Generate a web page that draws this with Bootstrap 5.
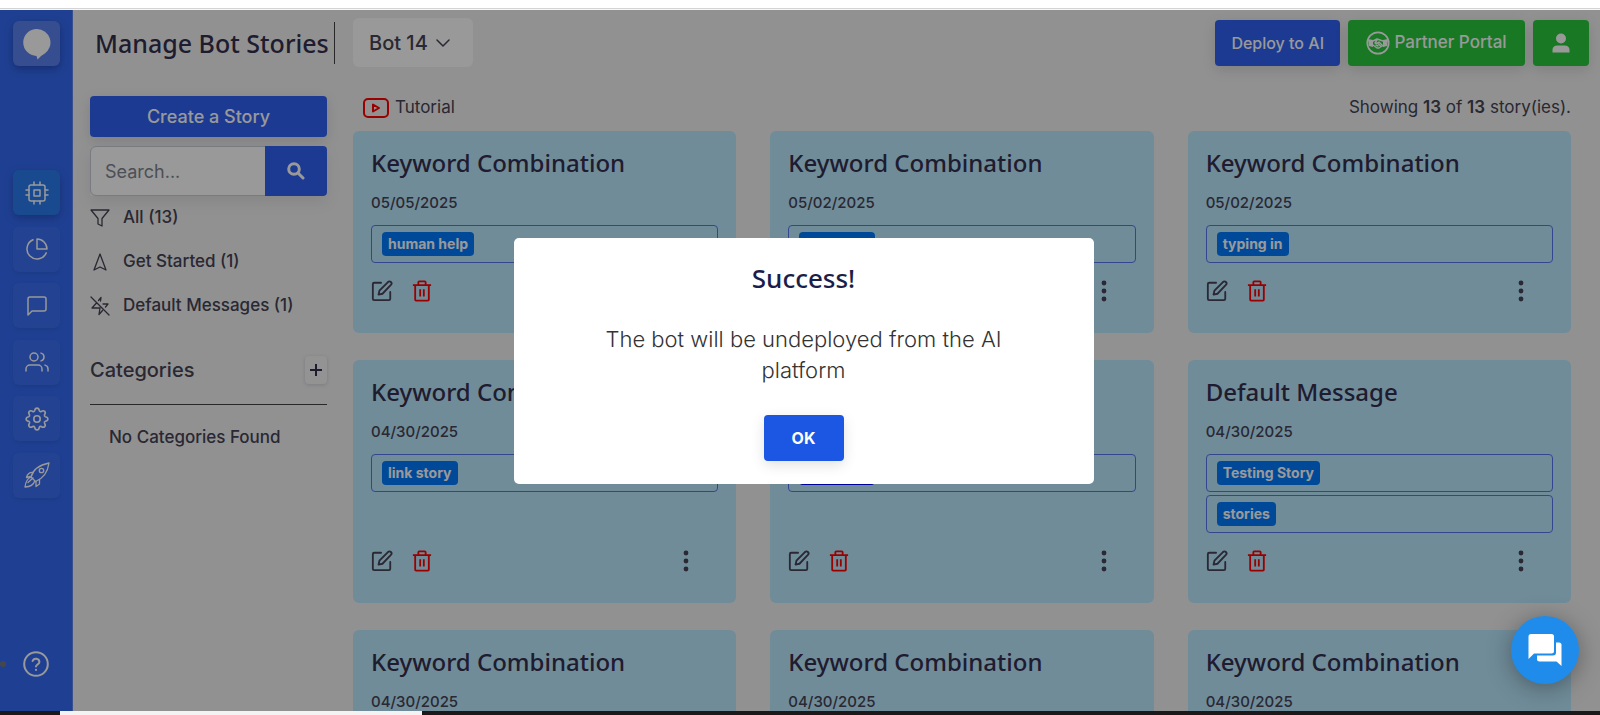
<!DOCTYPE html>
<html lang="en">
<head>
<meta charset="utf-8">
<meta name="viewport" content="width=device-width, initial-scale=1">
<title>Manage Bot Stories</title>
<link href="https://cdn.jsdelivr.net/npm/bootstrap@5.3.0/dist/css/bootstrap.min.css" rel="stylesheet">
<style>
  :root { --brand: #2f61f3; --rail: #346bf3; --ink: #454355; --head: #35304f; --sky: #bbe9ff; }
  body { font-family: Inter, sans-serif; font-size: 17px; color: var(--ink); background: #fff; }
  svg { display: block; flex: none; }
  .ln { fill: none; stroke: currentColor; stroke-width: 2; stroke-linecap: round; stroke-linejoin: round; }
  .browser-edge { height: 10px; background: #fff; border-bottom: 1px solid #f7f7f7; box-shadow: inset 0 -1px #d4d4d4; }
  .taskbar { height: 4px; background: #1c191b; padding-left: 60px; }
  .taskbar span { width: 362px; background: #f3f3f3; }
  .workspace { background: #f2f2f2; min-height: 0; }
  .heading-font { font-family: "Noto Sans", sans-serif; font-weight: 500; color: var(--head); }

  .rail { width: 73px; background: var(--rail); border-right: 1px solid #5f86ee; padding: 11px 12px 34px 13px; }
  .rail-tile { height: 45px; width: 47px; border-radius: 6px; color: #fff; background: rgba(255,255,255,.04); box-shadow: 0 2px 4px rgba(0,0,60,.1); }
  .rail-logo { background: #5a82f0; box-shadow: 0 3px 8px rgba(0,0,60,.3); }
  .rail-on { background: #2b7cf0; box-shadow: 0 3px 8px rgba(0,0,60,.25); }
  .rail-links { height: 328px; margin-top: 104px; }
  .rail-dot { width: 6px; height: 6px; left: 0; bottom: 44px; background: #777; }
  .rail-help { color: #fff; margin-left: 10px; }

  .topbar { padding: 8px 11px 0 17px; }
  .page-title { width: 245px; height: 42px; padding-left: 5px; border-right: 1px solid #444; font-size: 25px; }
  .bot-pick { height: 49px; width: 120px; margin-left: 18px; background: #fff; border-radius: 6px; font-size: 20px; font-weight: 500; color: var(--ink); padding: 0 16px; }
  .act { height: 46px; border-radius: 4px; color: #fff; padding: 0 16px; font-weight: 500; border: 0; box-shadow: 0 4px 14px rgba(0,0,0,.12); }
  .act:hover { color: #fff; }
  .act-blue { background: var(--brand); }
  .act-green { background: #28c83c; }
  .partner { font-size: 17px; min-width: 177px; }
  .bar-gap { gap: 8px; }

  .side { width: 237px; }
  .body-row { padding: 29px 29px 0 17px; gap: 26px; min-height: 0; }
  .create { height: 41px; font-size: 18px; }
  .search { height: 50px; margin-top: 9px; box-shadow: 0 6px 16px rgba(0,0,0,.08); }
  .search input { border-color: #c8cdd8; font-size: 18px; padding: 0 14px; border-radius: 6px; }
  .search input::placeholder { color: #7f8490; }
  .search button { width: 62px; padding: 0; height: 50px; box-shadow: none; }
  .filter { height: 44px; color: var(--ink); font-weight: 500; gap: 13px; }
  .cat-title { font-size: 20px; font-weight: 500; }
  .cat-row { margin-top: 28px; padding-bottom: 20px; border-bottom: 1px solid #444; }
  .plus { width: 22px; height: 28px; border-radius: 4px; background: #f5f5f6; color: var(--head); box-shadow: 0 1px 4px rgba(0,0,80,.15); }
  .no-cat { margin: 20px 0 0 19px; font-weight: 500; }

  .info-row { height: 24px; margin-bottom: 11px; }
  .info-row a { color: var(--ink); }
  .stories { --bs-gutter-x: 34px; --bs-gutter-y: 27px; }
  .story { background: var(--sky); border-radius: 6px; padding: 17px 18px 31px; }
  .story h2 { font-size: 24px; line-height: 30px; margin: 0 0 15px; }
  .story time { font-size: 15px; font-weight: 500; line-height: 20px; margin-bottom: 12px; }
  .tagbox { border: 1px solid #5576f0; border-radius: 4px; height: 38px; padding: 0 10px; margin-bottom: 3px; }
  .tag { background: #007bff; color: #fff; border-radius: 4px; height: 24px; font-size: 14px; font-weight: 700; padding: 0 6px; line-height: 23px; }
  .tag-wide { min-width: 76px; }
  .tag-navy { background: #00f; }
  .tools { padding: 14px 29px 0 0; gap: 19px; }
  .tools button { color: var(--ink); }
  .tools .del { color: #f00; }

  .shade { background: rgba(0,0,0,.4); padding-left: 7px; z-index: 10; }
  .alert-box { width: 580px; max-width: 90%; background: #fff; border-radius: 5px; padding: 23px 64px 23px; }
  .alert-box h2 { font-size: 26px; line-height: 34px; color: #1b1e4b; margin-bottom: 29px; }
  .alert-box p { font-size: 22px; line-height: 31px; font-weight: 300; color: #333; margin: 0 0 29px; }
  .ok { background: #1c57e3; width: 80px; font-weight: 700; padding: 0; }
  .chat { width: 68px; height: 68px; right: 21px; bottom: 27px; z-index: 11; background: #1f8ceb; color: #fff; box-shadow: 0 4px 24px rgba(0,0,0,.35); }
</style>
</head>
<body>
<svg width="0" height="0" class="position-absolute" aria-hidden="true">
  <symbol id="i-edit" viewBox="0 0 24 24"><path class="ln" d="M11 3H3.500Q2 3 2 4.500V20.500Q2 22 3.500 22H19.500Q21 22 21 20.500V13M18.500 2.200a2.200 2.200 0 0 1 3.200 3.200L12.500 15l-4.300 1 1-4.300z"/></symbol>
  <symbol id="i-trash" viewBox="0 0 22 24"><path class="ln" style="stroke-linecap:butt" d="M1 5.500H21M3.500 5.500V21.500Q3.500 22.500 4.500 22.500H17.500Q18.500 22.500 18.500 21.500V5.500M7 5V2.500Q7 1.500 8 1.500H14Q15 1.500 15 2.500V5M9 10V18M13 10V18"/></symbol>
  <symbol id="i-dots" viewBox="0 0 6 22"><g fill="currentColor"><circle cx="3" cy="3" r="2.400"/><circle cx="3" cy="11" r="2.400"/><circle cx="3" cy="19" r="2.400"/></g></symbol>
</svg>
<div class="d-flex flex-column vh-100 overflow-hidden">
  <div class="browser-edge flex-shrink-0"></div>

  <div class="workspace d-flex flex-grow-1 position-relative overflow-hidden">
    <nav class="rail d-flex flex-column flex-shrink-0 position-relative" aria-label="Main">
      <a href="#" class="rail-tile rail-logo d-flex align-items-center justify-content-center flex-shrink-0" aria-label="Home">
        <svg width="28" height="32" viewBox="0 0 28 32"><path fill="#fff" d="M14 1a13.500 13.500 0 0 1 7.500 24.700Q17 28 14.500 31.500L13.500 28A13.500 13.500 0 0 1 14 1z"/></svg>
      </a>
      <div class="rail-links d-flex flex-column justify-content-between flex-shrink-0">
        <a href="#" class="rail-tile rail-on d-flex align-items-center justify-content-center" aria-label="Bots"><svg width="24" height="24" viewBox="0 0 24 24"><g class="ln" style="stroke-width:1.500"><rect x="4" y="4" width="16" height="16" rx="2"/><rect x="9" y="9" width="6" height="6"/><path d="M9 1v3M15 1v3M9 20v3M15 20v3M20 9h3M20 14h3M1 9h3M1 14h3"/></g></svg></a>
        <a href="#" class="rail-tile d-flex align-items-center justify-content-center" aria-label="Analytics"><svg width="24" height="24" viewBox="0 0 24 24"><path class="ln" style="stroke-width:1.500" d="M21.200 15.900A10 10 0 1 1 8 2.800M22 12A10 10 0 0 0 12 2v10z"/></svg></a>
        <a href="#" class="rail-tile d-flex align-items-center justify-content-center" aria-label="Chats"><svg width="24" height="24" viewBox="0 0 24 24"><path class="ln" style="stroke-width:1.500" d="M21 15a2 2 0 0 1-2 2H7l-4 4V5a2 2 0 0 1 2-2h14a2 2 0 0 1 2 2z"/></svg></a>
        <a href="#" class="rail-tile d-flex align-items-center justify-content-center" aria-label="Users"><svg width="24" height="24" viewBox="0 0 24 24"><g class="ln" style="stroke-width:1.500"><path d="M17 21v-2a4 4 0 0 0-4-4H5a4 4 0 0 0-4 4v2M23 21v-2a4 4 0 0 0-3-3.870M16 3.130a4 4 0 0 1 0 7.750"/><circle cx="9" cy="7" r="4"/></g></svg></a>
        <a href="#" class="rail-tile d-flex align-items-center justify-content-center" aria-label="Settings"><svg width="24" height="24" viewBox="0 0 24 24"><g class="ln" style="stroke-width:1.600"><circle cx="12" cy="12" r="3.200"/><path d="M9.700 3.700c.6-3.400 4-3.400 4.600 0a1.500 1.500 0 0 0 1.900.8c2.800-2 5.300.5 3.300 3.300a1.500 1.500 0 0 0 .8 1.900c3.400.6 3.400 4 0 4.600a1.500 1.500 0 0 0-.8 1.900c2 2.800-.5 5.300-3.300 3.300a1.500 1.500 0 0 0-1.900.8c-.6 3.400-4 3.400-4.600 0a1.500 1.500 0 0 0-1.900-.8c-2.800 2-5.300-.5-3.300-3.300a1.500 1.500 0 0 0-.8-1.900c-3.400-.6-3.400-4 0-4.600a1.500 1.500 0 0 0 .8-1.900c-2-2.800.5-5.300 3.300-3.300a1.500 1.500 0 0 0 1.900-.8z"/></g></svg></a>
        <a href="#" class="rail-tile d-flex align-items-center justify-content-center" aria-label="Launch"><svg width="26" height="26" viewBox="0 0 26 26"><g class="ln" style="stroke-width:1.300"><path d="M7 15Q10 4 25 1Q23 15 11.500 19.500z"/><circle cx="17.500" cy="8.500" r="2.200"/><path d="M9 10.500Q4 10 2.500 15.500L6.500 14.500M15.500 17.500V22L12 24.500V19.500M6.500 15.500Q2 17 1 25Q9 24.500 10.500 19.500M4 20.500l5-4.500"/></g></svg></a>
      </div>
      <a href="#" class="rail-help mt-auto" aria-label="Help"><svg width="26" height="26" viewBox="0 0 26 26"><g class="ln"><circle cx="13" cy="13" r="11.800"/><path d="M9.600 10a3.500 3.500 0 0 1 6.800 1c0 2.300-3.400 2.700-3.400 4.500M13 18.800v.1"/></g></svg></a>
      <span class="rail-dot position-absolute rounded-circle"></span>
    </nav>

    <div class="d-flex flex-column flex-grow-1">
      <header class="topbar d-flex align-items-center">
        <h1 class="page-title heading-font d-flex align-items-center text-nowrap mb-0 flex-shrink-0">Manage Bot Stories</h1>
        <button type="button" class="bot-pick btn border-0 d-flex align-items-center gap-2 text-nowrap">Bot 14
          <svg width="14" height="8" viewBox="0 0 14 8"><path class="ln" style="stroke-width:1.500" d="M1 1l6 6 6-6"/></svg>
        </button>
        <div class="d-flex bar-gap ms-auto">
          <button type="button" class="act act-blue btn text-nowrap">Deploy to AI</button>
          <button type="button" class="act act-green partner btn d-flex align-items-center justify-content-center gap-1 text-nowrap">
            <svg width="24" height="24" viewBox="0 0 24 24"><circle cx="12" cy="12" r="10.700" fill="none" stroke="#fff" stroke-width="1.700"/><path fill="#fff" d="M2 8l5 1v7l-4-1zM22 8l-5 1v7l4-1z"/><path class="ln" style="stroke-width:1.400" d="M7 10l4-2 3 1 3 1M11 9l-2 3q2 1 4-1l4 4M7 14l4 3h2l3-2M10 14l2 1M12 12.500l2.500 2.500"/></svg>
            Partner Portal</button>
          <button type="button" class="act act-green btn d-flex align-items-center justify-content-center" aria-label="Account">
            <svg width="24" height="24" viewBox="0 0 24 24"><path fill="#fff" d="M12 2.500a5 5 0 1 1 0 10 5 5 0 0 1 0-10zM3.500 21.500v-2.500q0-4.500 5-4.500h7q5 0 5 4.500V21.500z"/></svg>
          </button>
        </div>
      </header>

      <div class="body-row d-flex flex-grow-1">
        <aside class="side flex-shrink-0">
          <button type="button" class="act act-blue create btn w-100 p-0">Create a Story</button>
          <form class="search input-group">
            <input type="search" class="form-control" placeholder="Search..." aria-label="Search stories">
            <button type="button" class="act act-blue btn d-flex align-items-center justify-content-center" aria-label="Search"><svg width="18" height="18" viewBox="0 0 18 18"><g fill="none" stroke="#fff" stroke-width="3"><circle cx="7" cy="7" r="5.300"/><path stroke-linecap="round" d="M11 11l5 5"/></g></svg></button>
          </form>
          <nav aria-label="Story filters">
            <a href="#" class="filter d-flex align-items-center text-decoration-none"><svg width="20" height="20" viewBox="0 0 20 20"><path class="ln" style="stroke-width:1.300" d="M1 2H19L12 10.500V18L8 16V10.500z"/></svg>All (13)</a>
            <a href="#" class="filter d-flex align-items-center text-decoration-none"><svg width="20" height="20" viewBox="0 0 20 20"><path class="ln" style="stroke-width:1.300" d="M10 2L16 18L10 15L4 18z"/></svg>Get Started (1)</a>
            <a href="#" class="filter d-flex align-items-center text-decoration-none"><svg width="20" height="20" viewBox="0 0 20 20"><path class="ln" style="stroke-width:1.300" d="M1 1L19 19M10.500 5L11 1.500L8.500 4.500M13 8H18L15.500 11M6 7.500L2 12H10L9 18.500L12.500 14.500"/></svg>Default Messages (1)</a>
          </nav>
          <div class="cat-row d-flex align-items-center justify-content-between">
            <span class="cat-title lh-1">Categories</span>
            <button type="button" class="plus btn p-0 border-0 d-flex align-items-center justify-content-center" aria-label="Add category"><svg width="12" height="12" viewBox="0 0 12 12"><path stroke="currentColor" stroke-width="2" d="M6 0V12M0 6H12"/></svg></button>
          </div>
          <p class="no-cat">No Categories Found</p>
        </aside>

        <main class="flex-grow-1">
          <div class="info-row d-flex align-items-center justify-content-between">
            <a href="#" class="d-flex align-items-center gap-1 text-decoration-none ms-2"><svg width="30" height="20" viewBox="0 0 30 20"><g fill="none" stroke="#f00" stroke-width="2" stroke-linejoin="round"><rect x="3" y="1" width="24" height="18" rx="4"/><path d="M12 6.500V13.500L18 10z"/></g></svg>Tutorial</a>
            <span>Showing <b class="fw-semibold">13</b> of <b class="fw-semibold">13</b> story(ies).</span>
          </div>
          <div class="stories row row-cols-3">
            <div class="col"><article class="story h-100 d-flex flex-column">
              <h2 class="heading-font">Keyword Combination</h2><time>05/05/2025</time>
              <div class="tagbox d-flex align-items-center"><span class="tag">human help</span></div>
              <div class="tools d-flex mt-auto"><button class="btn p-0 border-0" type="button" aria-label="Edit"><svg width="22" height="22"><use href="#i-edit"/></svg></button><button class="btn p-0 border-0 del" type="button" aria-label="Delete"><svg width="20" height="22"><use href="#i-trash"/></svg></button></div>
            </article></div>
            <div class="col"><article class="story h-100 d-flex flex-column">
              <h2 class="heading-font">Keyword Combination</h2><time>05/02/2025</time>
              <div class="tagbox d-flex align-items-center"><span class="tag tag-wide"></span></div>
              <div class="tools d-flex mt-auto"><button class="btn p-0 border-0 ms-auto" type="button" aria-label="More"><svg width="6" height="22"><use href="#i-dots"/></svg></button></div>
            </article></div>
            <div class="col"><article class="story h-100 d-flex flex-column">
              <h2 class="heading-font">Keyword Combination</h2><time>05/02/2025</time>
              <div class="tagbox d-flex align-items-center"><span class="tag">typing in</span></div>
              <div class="tools d-flex mt-auto"><button class="btn p-0 border-0" type="button" aria-label="Edit"><svg width="22" height="22"><use href="#i-edit"/></svg></button><button class="btn p-0 border-0 del" type="button" aria-label="Delete"><svg width="20" height="22"><use href="#i-trash"/></svg></button><button class="btn p-0 border-0 ms-auto" type="button" aria-label="More"><svg width="6" height="22"><use href="#i-dots"/></svg></button></div>
            </article></div>

            <div class="col"><article class="story h-100 d-flex flex-column">
              <h2 class="heading-font">Keyword Combination</h2><time>04/30/2025</time>
              <div class="tagbox d-flex align-items-center"><span class="tag">link story</span></div>
              <div class="tools d-flex mt-auto"><button class="btn p-0 border-0" type="button" aria-label="Edit"><svg width="22" height="22"><use href="#i-edit"/></svg></button><button class="btn p-0 border-0 del" type="button" aria-label="Delete"><svg width="20" height="22"><use href="#i-trash"/></svg></button><button class="btn p-0 border-0 ms-auto" type="button" aria-label="More"><svg width="6" height="22"><use href="#i-dots"/></svg></button></div>
            </article></div>
            <div class="col"><article class="story h-100 d-flex flex-column">
              <h2 class="heading-font invisible" aria-hidden="true">&nbsp;</h2><time class="invisible">&nbsp;</time>
              <div class="tagbox d-flex align-items-center"><span class="tag tag-wide tag-navy"></span></div>
              <div class="tools d-flex mt-auto"><button class="btn p-0 border-0" type="button" aria-label="Edit"><svg width="22" height="22"><use href="#i-edit"/></svg></button><button class="btn p-0 border-0 del" type="button" aria-label="Delete"><svg width="20" height="22"><use href="#i-trash"/></svg></button><button class="btn p-0 border-0 ms-auto" type="button" aria-label="More"><svg width="6" height="22"><use href="#i-dots"/></svg></button></div>
            </article></div>
            <div class="col"><article class="story h-100 d-flex flex-column">
              <h2 class="heading-font">Default Message</h2><time>04/30/2025</time>
              <div class="tagbox d-flex align-items-center"><span class="tag">Testing Story</span></div>
              <div class="tagbox d-flex align-items-center"><span class="tag">stories</span></div>
              <div class="tools d-flex mt-auto"><button class="btn p-0 border-0" type="button" aria-label="Edit"><svg width="22" height="22"><use href="#i-edit"/></svg></button><button class="btn p-0 border-0 del" type="button" aria-label="Delete"><svg width="20" height="22"><use href="#i-trash"/></svg></button><button class="btn p-0 border-0 ms-auto" type="button" aria-label="More"><svg width="6" height="22"><use href="#i-dots"/></svg></button></div>
            </article></div>

            <div class="col"><article class="story h-100 d-flex flex-column"><h2 class="heading-font">Keyword Combination</h2><time>04/30/2025</time></article></div>
            <div class="col"><article class="story h-100 d-flex flex-column"><h2 class="heading-font">Keyword Combination</h2><time>04/30/2025</time></article></div>
            <div class="col"><article class="story h-100 d-flex flex-column"><h2 class="heading-font">Keyword Combination</h2><time>04/30/2025</time></article></div>
          </div>
        </main>
      </div>
    </div>

    <div class="shade position-absolute top-0 start-0 w-100 h-100 d-flex align-items-center justify-content-center">
      <div class="alert-box text-center" role="dialog" aria-labelledby="done-title">
        <h2 id="done-title" class="heading-font">Success!</h2>
        <p>The bot will be undeployed from the AI platform</p>
        <button type="button" class="act ok btn">OK</button>
      </div>
    </div>
    <button type="button" class="chat btn p-0 border-0 rounded-circle position-absolute d-flex align-items-center justify-content-center" aria-label="Open chat">
      <svg width="34" height="34" viewBox="0 0 34 34"><path fill="currentColor" d="M3 1H23.500Q26 1 26 3.500V18Q26 20.500 23.500 20.500H6L.5 26V3.500Q.5 1 3 1zM28 9.500H31Q33.500 9.500 33.500 12V33L28.500 28.500H11.500Q9 28.500 9 26V22.500H25Q28 22.500 28 19.500z"/></svg>
    </button>
  </div>

  <div class="taskbar d-flex flex-shrink-0"><span></span></div>
</div>
<script src="https://cdn.jsdelivr.net/npm/bootstrap@5.3.0/dist/js/bootstrap.bundle.min.js"></script>
</body>
</html>
